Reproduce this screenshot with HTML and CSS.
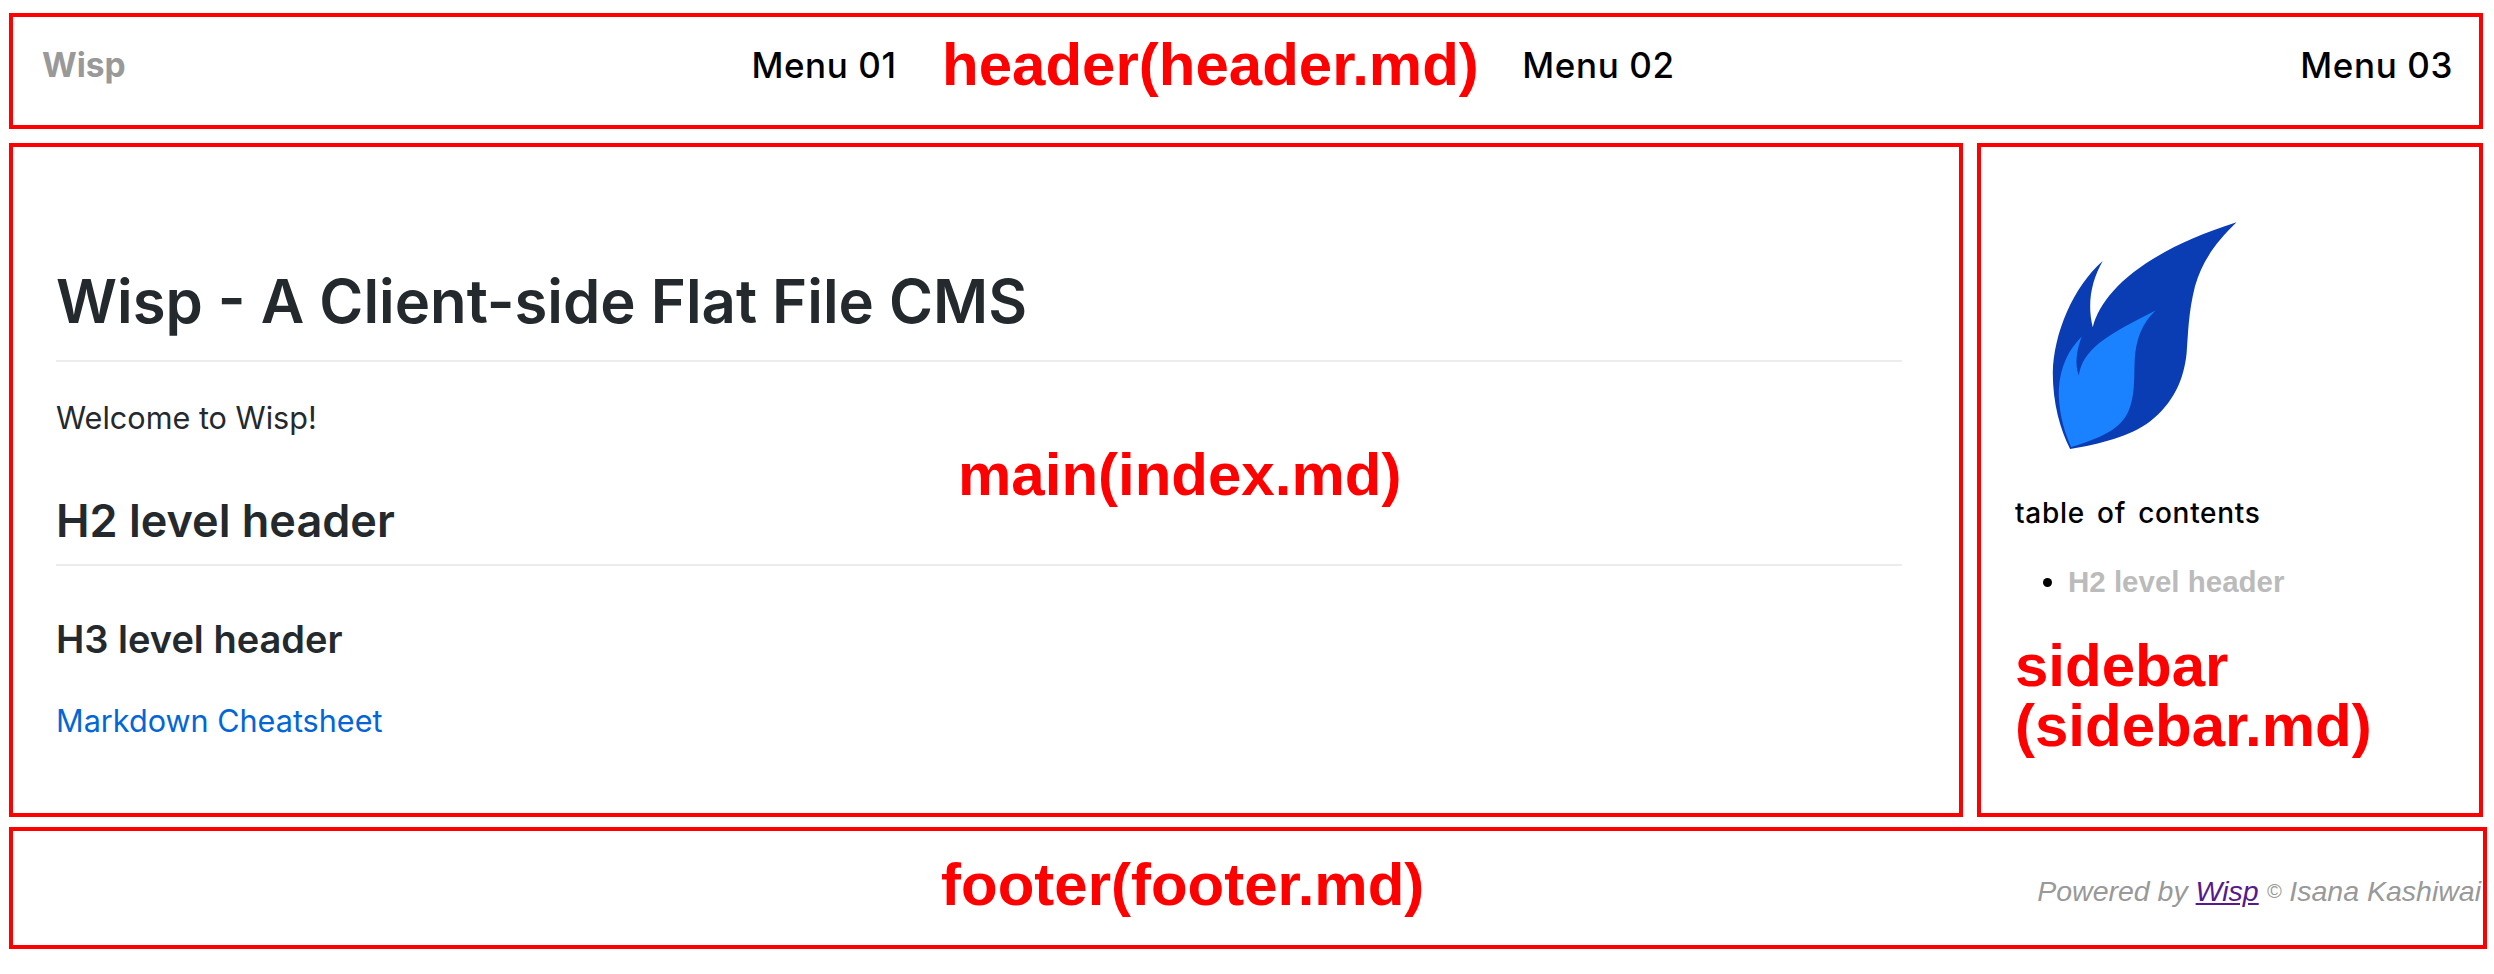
FILE: index.html
```html
<!DOCTYPE html>
<html lang="en">
<head>
    <meta charset="UTF-8">
    <meta name="viewport" content="width=device-width, initial-scale=1.0">
    <title>Wisp</title>
    <link rel="stylesheet" href="styles.css">
</head>
<body>
    <header class="site-header region">
        <a class="brand" href="#">Wisp</a>
        <a class="menu-link" href="#">Menu 01</a>
        <a class="menu-link" href="#">Menu 02</a>
        <a class="menu-link" href="#">Menu 03</a>
        <span class="label label-header">header(header.md)</span>
    </header>

    <div class="columns">
        <main class="main region">
            <h1>Wisp - A Client-side Flat File CMS</h1>
            <p>Welcome to Wisp!</p>
            <h2>H2 level header</h2>
            <h3>H3 level header</h3>
            <p><a class="doc-link" href="#">Markdown Cheatsheet</a></p>
            <span class="label label-main">main(index.md)</span>
        </main>

        <aside class="sidebar region">
            <svg class="logo" viewBox="270 90 570 700" aria-label="Wisp logo">
                <path fill="#0a3db3" d="M330 778 C300 720 278 640 278 550 C280 430 340 290 428 213 C395 270 380 340 398 412 C425 310 540 190 830 97 C760 165 725 220 705 290 C685 370 685 430 680 490 C672 570 640 640 570 695 C510 740 420 762 330 778 Z"/>
                <path fill="#1a82ff" d="M333 772 C305 710 295 650 296 600 C300 530 325 480 365 440 C350 480 343 520 356 557 C370 480 430 440 587 362 C545 400 528 450 524 510 C522 570 525 620 505 665 C480 720 420 745 333 772 Z"/>
            </svg>
            <h4 class="toc-title">table of contents</h4>
            <ul class="toc">
                <li><a href="#">H2 level header</a></li>
            </ul>
            <p class="label-sidebar">sidebar<br>(sidebar.md)</p>
        </aside>
    </div>

    <footer class="site-footer region">
        <span class="label label-footer">footer(footer.md)</span>
        <p class="credit">Powered by <a href="#">Wisp</a> <span class="copy">&copy;</span> Isana Kashiwai</p>
    </footer>
</body>
</html>
```

FILE: styles.css
```css
* {
    box-sizing: border-box;
}
body {
    margin: 0;
    padding: 13px 11px 0 9px;
    background: #fff;
    font-family: Inter, "Liberation Sans", sans-serif;
    color: #24292e;
}
a {
    text-decoration: none;
}
.region {
    position: relative;
    border: 4px solid #f00;
}
.label {
    position: absolute;
    color: #f00;
    font-family: "Liberation Sans", sans-serif;
    font-weight: 700;
    font-size: 60px;
    line-height: 1;
    white-space: nowrap;
}
.site-header {
    height: 116px;
    display: flex;
    justify-content: space-between;
    align-items: center;
    padding: 0 26px 12px 29px;
}
.brand {
    color: #999;
    font-weight: 700;
    font-size: 33.5px;
}
.menu-link {
    color: #000;
    font-weight: 500;
    font-size: 35px;
    letter-spacing: 0.6px;
}
.label-header {
    left: 929px;
    top: 18px;
}
.columns {
    display: flex;
    justify-content: space-between;
    margin-top: 14px;
}
.main {
    width: 1954px;
    height: 674px;
    padding: 118px 57px 0 43px;
}
h1 {
    margin: 0;
    padding-bottom: 23px;
    border-bottom: 2px solid #eaecef;
    font-size: 59.8px;
    font-weight: 600;
    line-height: 72px;
}
.main p {
    width: fit-content;
    margin: 33px 0 0;
    font-size: 30.6px;
    line-height: 46px;
}
h2 {
    margin: 53px 0 0;
    padding-bottom: 16px;
    border-bottom: 2px solid #eaecef;
    font-size: 45px;
    font-weight: 600;
    line-height: 54px;
}
h3 {
    margin: 50px 0 0;
    font-size: 38px;
    font-weight: 600;
    line-height: 46px;
}
.main h3 + p {
    margin-top: 36px;
}
.doc-link {
    color: #0366d6;
}
.label-main {
    left: 945px;
    top: 298px;
}
.sidebar {
    width: 506px;
    height: 674px;
    padding: 73px 30px 0 34px;
}
.logo {
    display: block;
    width: 190px;
    height: 233px;
    margin-left: 35px;
}
.toc-title {
    margin: 43px 0 0;
    color: #000;
    font-size: 28px;
    font-weight: 500;
    letter-spacing: 0.7px;
    word-spacing: 4px;
}
.toc {
    margin: 35px 0 0;
    padding-left: 53px;
    font-family: "Liberation Sans", sans-serif;
    font-size: 29.5px;
    font-weight: 700;
    color: #000;
}
.toc a {
    color: #bbb;
}
.label-sidebar {
    margin: 37px 0 0;
    color: #f00;
    font-family: "Liberation Sans", sans-serif;
    font-weight: 700;
    font-size: 60px;
    line-height: 60px;
}
.site-footer {
    height: 122px;
    margin: 10px -4px 0 0;
    padding-right: 2px;
    display: flex;
    justify-content: flex-end;
    align-items: center;
}
.label-footer {
    left: 928px;
    top: 24px;
}
.credit {
    margin: 6px 0 0;
    color: #999;
    font-family: "Liberation Sans", sans-serif;
    font-size: 28.5px;
    font-style: italic;
}
.credit a {
    color: #551a8b;
    text-decoration: underline;
}
.copy {
    font-size: 20px;
    vertical-align: 3px;
}
```
